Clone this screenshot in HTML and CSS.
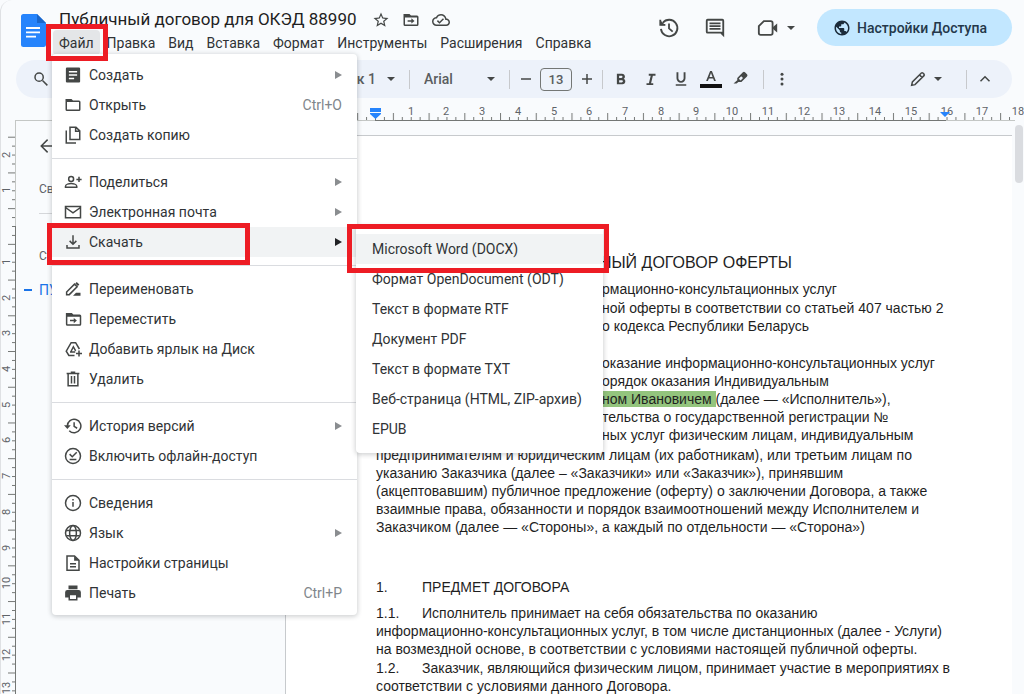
FILE: index.html
```html
<!DOCTYPE html>
<html lang="ru">
<head>
<meta charset="utf-8">
<title>Публичный договор для ОКЭД 88990</title>
<link rel="stylesheet" href="styles.css">
</head>
<body>
<header class="header">
  <svg class="logo" viewBox="0 0 25 33"><path fill="#2684fc" d="M2.500 0H16l9 9v21.500a2.500 2.500 0 0 1-2.500 2.500h-20A2.500 2.500 0 0 1 0 30.500v-28A2.500 2.500 0 0 1 2.500 0z"/><path fill="#1a66ca" d="M16 0l9 9h-9z"/><path stroke="#fff" stroke-width="1.800" d="M5 14h14M5 18.300h14M5 22.600h10"/></svg>
  <div class="heading">
    <div class="title-row">
      <h1 class="doc-title">Публичный договор для ОКЭД 88990</h1>
      <button class="icon-btn" aria-label="Пометить"><svg class="ic18" viewBox="0 0 24 24"><path d="M22 9.240l-7.190-.62L12 2 9.190 8.630 2 9.240l5.460 4.730L5.820 21 12 17.270 18.180 21l-1.630-7.030L22 9.240zM12 15.400l-3.760 2.270 1-4.280-3.320-2.880 4.380-.38L12 6.100l1.710 4.040 4.380.38-3.320 2.880 1 4.280L12 15.400z"/></svg></button>
      <button class="icon-btn" aria-label="Переместить"><svg class="ic18" viewBox="0 0 24 24"><path d="M2 4h8l2 2h8a2 2 0 0 1 2 2v10a2 2 0 0 1-2 2H4a2 2 0 0 1-2-2zM4 8.500V18h16V8.500z" fill-rule="evenodd"/><path d="M7.500 12.300h5V9.800l4.200 3.500-4.200 3.500v-2.500h-5z"/></svg></button>
      <button class="icon-btn" aria-label="Статус документа"><svg class="ic18" viewBox="0 0 24 24"><path d="M19.350 10.040C18.670 6.590 15.640 4 12 4 9.110 4 6.600 5.640 5.350 8.040 2.340 8.360 0 10.910 0 14c0 3.310 2.690 6 6 6h13c2.760 0 5-2.240 5-5 0-2.640-2.050-4.780-4.650-4.960zM19 18H6c-2.210 0-4-1.790-4-4 0-2.050 1.530-3.760 3.560-3.970l1.070-.11.5-.95C8.080 7.140 9.940 6 12 6c2.620 0 4.880 1.860 5.390 4.430l.3 1.500 1.530.11c1.560.1 2.780 1.410 2.780 2.960 0 1.650-1.350 3-3 3zm-9-3.820l-2.090-2.090L6.500 13.500 10 17l6.010-6.010-1.410-1.410z"/></svg></button>
    </div>
    <nav class="menubar">
      <button class="open">Файл</button><button>Правка</button><button>Вид</button><button>Вставка</button><button>Формат</button><button>Инструменты</button><button>Расширения</button><button>Справка</button>
    </nav>
  </div>
  <div class="actions">
    <button class="icon-btn history" aria-label="История версий"><svg class="ic22 line" viewBox="0 0 24 24"><path d="M3.200 13a9 9 0 1 0 2-6.700M2.500 3v5.500H8M12 7v5.500l4 3.500"/><path d="M3 4l5 5H3z" fill="#444746" stroke="none"/></svg></button>
    <button class="icon-btn" aria-label="Комментарии"><svg class="ic22" viewBox="0 0 24 24"><path fill-rule="evenodd" d="M4 2h16a2 2 0 0 1 2 2v18l-4-4H4a2 2 0 0 1-2-2V4a2 2 0 0 1 2-2zm0 2v12h16V4z"/><path d="M6 6h12v2H6zM6 9h12v2H6zM6 12h12v2H6z"/></svg></button>
    <button class="icon-btn meet" aria-label="Встреча"><svg class="ic22 line" viewBox="0 0 24 24"><path d="M7.500 4.500H15a2 2 0 0 1 2 2v11a2 2 0 0 1-2 2H4a2 2 0 0 1-2-2V10z"/><path d="M17.500 11l4.500-4v10l-4.500-4z" fill="#444746" stroke="none"/></svg><svg class="caret" viewBox="0 0 8 4"><path d="M0 0h8L4 4z"/></svg></button>
    <button class="share"><svg class="ic18" viewBox="0 0 24 24"><path d="M12 2C6.480 2 2 6.480 2 12s4.480 10 10 10 10-4.480 10-10S17.520 2 12 2zm-1 17.930c-3.950-.49-7-3.850-7-7.930 0-.62.08-1.210.21-1.790L9 15v1c0 1.100.9 2 2 2v1.930zm6.900-2.540c-.26-.81-1-1.390-1.900-1.390h-1v-3c0-.55-.45-1-1-1H8v-2h2c.55 0 1-.45 1-1V7h2c1.100 0 2-.9 2-2v-.41c2.930 1.190 5 4.060 5 7.410 0 2.080-.8 3.970-2.100 5.390z"/></svg>Настройки Доступа</button>
  </div>
</header>

<div class="toolbar">
  <button class="tool search" aria-label="Поиск"><svg class="ic18 line" viewBox="0 0 24 24"><circle cx="9.500" cy="9.500" r="5.500"/><path d="M14 14l6.500 6.500"/></svg></button>
  <label class="select style"><select aria-label="Стиль"><option>Заголовок 1</option></select><svg class="caret" viewBox="0 0 8 4"><path d="M0 0h8L4 4z"/></svg></label>
  <span class="divider"></span>
  <label class="select font"><select aria-label="Шрифт"><option>Arial</option></select><svg class="caret" viewBox="0 0 8 4"><path d="M0 0h8L4 4z"/></svg></label>
  <span class="divider"></span>
  <button class="step" aria-label="Уменьшить"><svg class="ic12 line" viewBox="0 0 12 12"><path d="M1 6h10"/></svg></button>
  <input class="size" aria-label="Размер шрифта" value="13">
  <button class="step" aria-label="Увеличить"><svg class="ic12 line" viewBox="0 0 12 12"><path d="M1 6h10M6 1v10"/></svg></button>
  <span class="divider"></span>
  <div class="format">
    <button class="tool" aria-label="Полужирный"><svg class="ic18" viewBox="0 0 24 24"><path d="M15.600 11.790c.97-.67 1.650-1.770 1.650-2.790 0-2.260-1.750-4-4-4H6.500v14h7.540c2.090 0 3.710-1.700 3.710-3.790 0-1.520-.86-2.820-2.150-3.420zM9.500 7.500h3c.83 0 1.500.67 1.500 1.500s-.67 1.500-1.500 1.500h-3v-3zm3.500 9H9.500v-3H13c.83 0 1.500.67 1.500 1.500s-.67 1.500-1.500 1.500z"/></svg></button>
    <button class="tool" aria-label="Курсив"><svg class="ic18" viewBox="0 0 24 24"><path d="M9 5v2.500h2.600L9.200 17.500H6V20h9v-2.500h-2.900l2.400-10H18V5z"/></svg></button>
    <button class="tool" aria-label="Подчеркнутый"><svg class="ic18" viewBox="0 0 24 24"><path d="M12 17c3.310 0 6-2.690 6-6V3h-2.500v8c0 1.930-1.570 3.500-3.500 3.500S8.500 12.930 8.500 11V3H6v8c0 3.310 2.690 6 6 6zm-7 2v2h14v-2H5z"/></svg></button>
    <button class="tool" aria-label="Цвет текста"><svg class="ic22" viewBox="0 0 22 22"><path d="M10.100 3h1.800l4 10h-1.800l-1-2.600H8.900L7.900 13H6.100zm-.6 5.900h3L11 4.900z"/><path fill="#111" d="M0 16h22v4H0z"/></svg></button>
    <button class="tool" aria-label="Выделение"><svg class="ic18" viewBox="0 0 24 24"><path fill-rule="evenodd" d="M7 10.500L14.500 3a2 2 0 0 1 2.800 0l2.700 2.700a2 2 0 0 1 0 2.800L12.500 16H8.500L6 18H2l5-4.500zM9 11.500l2.500 2.500 3.200-3.200-2.500-2.500z"/></svg></button>
  </div>
  <span class="divider"></span>
  <button class="tool" aria-label="Ещё"><svg class="ic18" viewBox="0 0 24 24"><circle cx="12" cy="5.500" r="2"/><circle cx="12" cy="12" r="2"/><circle cx="12" cy="18.500" r="2"/></svg></button>
  <button class="mode" aria-label="Режим"><svg class="ic18 line" viewBox="0 0 24 24"><path d="M3.500 20.500l1-4.500L16.500 4a1.500 1.500 0 0 1 2 0l1.500 1.500a1.500 1.500 0 0 1 0 2L8 19.500zM14 6.500l3.500 3.500"/></svg><svg class="caret" viewBox="0 0 8 4"><path d="M0 0h8L4 4z"/></svg></button>
  <span class="divider"></span>
  <button class="tool" aria-label="Скрыть меню"><svg class="ic18 line" viewBox="0 0 24 24"><path d="M6 15l6-6 6 6"/></svg></button>
</div>

<div class="ruler-top">
  <svg viewBox="0 0 1024 23" width="1024" height="23">
    <defs><pattern id="cm" patternUnits="userSpaceOnUse" x="375" y="0" width="35.720" height="23"><path stroke="#747775" d="M.5 19v4M9.400 19v4M18.400 15v8M27.300 19v4"/></pattern></defs>
    <path fill="url(#cm)" d="M300 0h712v23H300z"/>
    <path stroke="#c4c7c5" d="M15 22.500h1000"/><path stroke="#747775" d="M375 22.500h571"/>
    <g class="marks" text-anchor="middle"><text x="411" y="17">1</text><text x="446" y="17">2</text><text x="482" y="17">3</text><text x="518" y="17">4</text><text x="554" y="17">5</text><text x="589" y="17">6</text><text x="625" y="17">7</text><text x="661" y="17">8</text><text x="696" y="17">9</text><text x="732" y="17">10</text><text x="768" y="17">11</text><text x="804" y="17">12</text><text x="839" y="17">13</text><text x="875" y="17">14</text><text x="911" y="17">15</text><text x="947" y="17">16</text><text x="982" y="17">17</text><text x="1018" y="17">18</text></g>
    <path fill="#2684fc" d="M370 10h11v4h-11zM370 15h11v1l-5.500 5-5.500-5zM940 14h10l-5 5z"/>
  </svg>
</div>

<main class="work">
  <div class="ruler-left">
    <svg viewBox="0 0 16 573" width="16" height="573">
      <defs><pattern id="cmv" patternUnits="userSpaceOnUse" x="0" y="105" width="16" height="35.720"><path stroke="#747775" d="M12 .5h4M12 9.400h4M8 18.400h8M12 27.300h4"/></pattern></defs>
      <path fill="url(#cmv)" d="M0 14h16v559H0z"/>
      <path stroke="#c4c7c5" d="M15.500 0v105"/><path stroke="#747775" d="M15.500 105v468"/>
      <g class="marks" text-anchor="middle"><text transform="translate(10 34) rotate(-90)">2</text><text transform="translate(10 69) rotate(-90)">1</text><text transform="translate(10 141) rotate(-90)">1</text><text transform="translate(10 177) rotate(-90)">2</text><text transform="translate(10 212) rotate(-90)">3</text><text transform="translate(10 248) rotate(-90)">4</text><text transform="translate(10 284) rotate(-90)">5</text><text transform="translate(10 319) rotate(-90)">6</text><text transform="translate(10 355) rotate(-90)">7</text><text transform="translate(10 391) rotate(-90)">8</text><text transform="translate(10 427) rotate(-90)">9</text><text transform="translate(10 462) rotate(-90)">10</text><text transform="translate(10 498) rotate(-90)">11</text><text transform="translate(10 534) rotate(-90)">12</text><text transform="translate(10 567) rotate(-90)">13</text></g>
    </svg>
  </div>
  <aside class="outline">
    <button class="back" aria-label="Назад"><svg class="ic18 line" viewBox="0 0 24 24"><path d="M22 12H4M11.500 3.500L3 12l8.500 8.500"/></svg></button>
    <p class="summary">Сводка</p>
    <p class="structure">Структура</p>
    <a class="entry" href="#offer"><span class="dash"></span>ПУ</a>
  </aside>
  <article class="page">
    <h2 class="offer" id="offer">ПУБЛИЧНЫЙ ДОГОВОР ОФЕРТЫ</h2>
    <p><span class="row"><span class="lead"></span><span>рмационно-консультационных услуг</span></span></p>
    <p class="next"><span class="row"><span class="lead"></span><span>ной оферты в соответствии со статьей 407 частью 2</span></span>
      <span class="row"><span class="lead"></span><span>о кодекса Республики Беларусь</span></span></p>
    <p class="terms"><span class="row"><span class="lead"></span><span>оказание информационно-консультационных услуг</span></span>
      <span class="row"><span class="lead"></span><span>орядок оказания Индивидуальным</span></span>
      <span class="row"><span class="lead"></span><span><mark>ном Ивановичем </mark>(далее — «Исполнитель»),</span></span>
      <span class="row"><span class="lead"></span><span>тельства о государственной регистрации №</span></span>
      <span class="row"><span class="lead"></span><span>ных услуг физическим лицам, индивидуальным</span></span></p>
    <p class="parties">предпринимателям и юридическим лицам (их работникам), или третьим лицам по<br>указанию Заказчика (далее – «Заказчики» или «Заказчик»), принявшим<br>(акцептовавшим) публичное предложение (оферту) о заключении Договора, а также<br>взаимные права, обязанности и порядок взаимоотношений между Исполнителем и<br>Заказчиком (далее — «Стороны», а каждый по отдельности — «Сторона»)</p>
    <h3 class="section"><span class="num">1.</span>ПРЕДМЕТ ДОГОВОРА</h3>
    <p><span class="num">1.1.</span>Исполнитель принимает на себя обязательства по оказанию<br>информационно-консультационных услуг, в том числе дистанционных (далее - Услуги)<br>на возмездной основе, в соответствии с условиями настоящей публичной оферты.</p>
    <p class="next"><span class="num">1.2.</span>Заказчик, являющийся физическим лицом, принимает участие в мероприятиях в<br>соответствии с условиями данного Договора.</p>
  </article>
  <div class="scroll"><div class="thumb"></div></div>
</main>

<div class="menu file-menu" role="menu">
  <button class="item"><svg class="ic18" viewBox="0 0 24 24"><path fill-rule="evenodd" d="M4 2h16a1.500 1.500 0 0 1 1.500 1.500v17A1.500 1.500 0 0 1 20 22H4a1.500 1.500 0 0 1-1.500-1.500v-17A1.500 1.500 0 0 1 4 2zm2.500 4.500v2h11v-2zm0 4.500v2h11v-2zm0 4.500v2h7v-2z"/></svg>Создать<i class="more"></i></button>
  <button class="item"><svg class="ic18" viewBox="0 0 24 24"><path fill-rule="evenodd" d="M2 4h8l2 2h8a2 2 0 0 1 2 2v10a2 2 0 0 1-2 2H4a2 2 0 0 1-2-2zM4 8v10h16V8z"/></svg>Открыть<kbd>Ctrl+O</kbd></button>
  <button class="item"><svg class="ic18 line" viewBox="0 0 24 24"><path d="M8 1.500h8l5 5V18H8zM15.500 2v5H21M3 6v16.500h13"/></svg>Создать копию</button>
  <hr>
  <button class="item"><svg class="ic18 line" viewBox="0 0 24 24"><circle cx="9.500" cy="8" r="3.300"/><path d="M2 19v-1.500c0-2.500 5-3.500 7.500-3.500s7.500 1 7.500 3.500V19zM16.500 8.500h7M20 5v7"/></svg>Поделиться<i class="more"></i></button>
  <button class="item"><svg class="ic18 line" viewBox="0 0 24 24"><path d="M2 4.500h20v15H2zM2 6l10 7 10-7"/></svg>Электронная почта<i class="more"></i></button>
  <button class="item active"><svg class="ic18 line" viewBox="0 0 24 24"><path d="M12 3v12M7.500 10.500L12 15l4.500-4.500M4 16v4h16v-4"/></svg>Скачать<i class="more"></i></button>
  <hr>
  <button class="item"><svg class="ic18 line" viewBox="0 0 24 24"><path d="M3.500 19.500v-3.500L14 5.500l3.500 3.500L7 19.500z"/><path d="M15 4.500L17 2.500l3.500 3.500-2 2zM12 21l4-4h6v4z" fill="#444746" stroke="none"/></svg>Переименовать</button>
  <button class="item"><svg class="ic18" viewBox="0 0 24 24"><path fill-rule="evenodd" d="M2.500 4h8l2 2H21a2 2 0 0 1 2 2v11a2 2 0 0 1-2 2H4.500a2 2 0 0 1-2-2zm2 5v10H21V9z"/><path d="M8 13h5v-2.500l4.200 3.500-4.200 3.500V15H8z"/></svg>Переместить</button>
  <button class="item"><svg class="ic18 line" viewBox="0 0 24 24"><path d="M14 20.500H6.500L3 15 9.500 3.500h6L20.500 12M9 16l3.500-7 3 5.500M8 16h7M20 14v8M16 18h8"/></svg>Добавить ярлык на Диск</button>
  <button class="item"><svg class="ic18 line" viewBox="0 0 24 24"><path d="M5.500 5v16h13V5M3.500 4.500h17M9 3h6M10 8v10M14 8v10"/></svg>Удалить</button>
  <hr>
  <button class="item"><svg class="ic18 line" viewBox="0 0 24 24"><path d="M4.500 12a9 9 0 1 1 2.500 6.200M13.500 7v5.500l4 2.500"/><path d="M0 11h9l-4.500 5z" fill="#444746" stroke="none"/></svg>История версий<i class="more"></i></button>
  <button class="item"><svg class="ic18 line" viewBox="0 0 24 24"><circle cx="12" cy="12" r="10"/><path d="M7.500 9.500l3.500 3.500 6-6M7.500 16.500h9"/></svg>Включить офлайн-доступ</button>
  <hr>
  <button class="item"><svg class="ic18 line" viewBox="0 0 24 24"><circle cx="12" cy="12" r="10"/><path d="M12 10.500V17M12 6.500v2"/></svg>Сведения</button>
  <button class="item"><svg class="ic18 line" viewBox="0 0 24 24"><circle cx="12" cy="12" r="10"/><ellipse cx="12" cy="12" rx="4.500" ry="10"/><path d="M3 8.500h18M3 15.500h18"/></svg>Язык<i class="more"></i></button>
  <button class="item"><svg class="ic18 line" viewBox="0 0 24 24"><path d="M4 2.500h10l6 6v13H4z"/><path d="M8 13h8M8 17h8"/><path d="M13.500 2.500V9H20z" fill="#444746" stroke="none"/></svg>Настройки страницы</button>
  <button class="item"><svg class="ic18" viewBox="0 0 24 24"><path fill-rule="evenodd" d="M6 2h12v5H6zM4.500 8h15a3 3 0 0 1 3 3v7H18v4H6v-4H1.500v-7a3 3 0 0 1 3-3zM8 15v5h8v-5z"/></svg>Печать<kbd>Ctrl+P</kbd></button>
</div>

<div class="menu download-menu" role="menu">
  <button class="item active">Microsoft Word (DOCX)</button>
  <button class="item">Формат OpenDocument (ODT)</button>
  <button class="item">Текст в формате RTF</button>
  <button class="item">Документ PDF</button>
  <button class="item">Текст в формате TXT</button>
  <button class="item">Веб-страница (HTML, ZIP-архив)</button>
  <button class="item">EPUB</button>
</div>

<div class="frame frame-file"></div>
<div class="frame frame-download"></div>
<div class="frame frame-docx"></div>
</body>
</html>
```
FILE: styles.css
```css
* { box-sizing: border-box; }
body {
  margin: 0;
  height: 100vh;
  display: flex;
  flex-direction: column;
  overflow: hidden;
  position: relative;
  background: #f9fbfd;
  border-left: 1px solid #dfe1e4;
  border-top-left-radius: 12px;
  font-family: Roboto, "Liberation Sans", sans-serif;
  font-size: 14px;
  color: #3c4043;
}
button {
  border: 0;
  padding: 0;
  margin: 0;
  background: none;
  font: inherit;
  color: inherit;
}
h1, h2, h3, p { margin: 0; font-weight: 400; }
svg { display: block; fill: #444746; flex: none; }
.line { fill: none; stroke: #444746; stroke-width: 2; }
.ic12 { width: 12px; height: 12px; }
.ic12.line { stroke-width: 1.5; }
.ic18 { width: 18px; height: 18px; }
.ic22 { width: 22px; height: 22px; }
.caret { width: 8px; height: 4px; }

.header {
  display: flex;
  align-items: flex-start;
  flex: none;
  height: 60px;
  padding: 0 12px 0 20px;
}
.logo { width: 25px; height: 33px; margin-top: 14px; }
.heading { padding: 9px 0 0 7px; }
.title-row { display: flex; align-items: center; gap: 12px; height: 21px; padding-left: 6px; }
.doc-title { font-size: 17px; line-height: 21px; color: #1f1f1f; margin-right: 3px; white-space: nowrap; }
.menubar { display: flex; gap: 1px; }
.menubar button {
  height: 25px;
  padding: 0 6px;
  border-radius: 4px;
  white-space: nowrap;
  color: #303336;
}
.menubar .open { background: #e4e6e8; }
.actions { display: flex; align-items: center; gap: 22px; margin-left: auto; padding-top: 9px; }
.history { margin-right: 2px; }
.meet { display: flex; align-items: center; gap: 8px; margin-left: 9px; }
.share {
  display: flex;
  align-items: center;
  gap: 6px;
  height: 37px;
  padding: 0 25px 0 16px;
  border-radius: 19px;
  background: #c2e7ff;
  color: #24384a;
  font-weight: 500;
  white-space: nowrap;
}
.share svg { fill: #1b2b3a; }

.toolbar {
  display: flex;
  align-items: center;
  flex: none;
  height: 38px;
  margin: 0 12px 0 15px;
  padding: 0 16px 0 8px;
  border-radius: 19px;
  background: #edf2fa;
  font-weight: 500;
  color: #5a5d60;
}
.tool { width: 22px; height: 26px; display: flex; align-items: center; justify-content: center; }
.search { width: 34px; }
.select { position: relative; display: flex; align-items: center; }
.select .caret { position: absolute; right: 7px; }
.select select {
  appearance: none;
  width: 100%;
  border: 0;
  background: none;
  font: inherit;
  color: inherit;
  padding: 0 26px 0 7px;
}
.style { width: 118px; margin-left: 226px; }
.style select { text-align-last: right; }
.font { width: 85px; }
.divider { width: 1px; height: 19px; margin: 0 7px; background: #c7c9cc; }
.step { width: 17px; height: 24px; display: flex; align-items: center; justify-content: center; }
.size {
  width: 32px;
  height: 23px;
  margin: 0 6px;
  padding: 0;
  border: 1px solid #747775;
  border-radius: 4px;
  background: none;
  font: inherit;
  font-size: 13px;
  color: inherit;
  text-align: center;
}
.format { display: flex; gap: 8px; padding-right: 4px; }
.mode { display: flex; align-items: center; gap: 7px; width: 52px; margin-left: auto; padding-left: 2px; }

.ruler-top { height: 23px; flex: none; overflow: hidden; }
.ruler-top svg { margin-left: -1px; }
.marks { fill: #5f6368; font-size: 11px; }

.work { flex: 1; min-height: 0; display: flex; overflow: hidden; }
.ruler-left { width: 15px; flex: none; overflow: hidden; }
.ruler-left svg { margin-left: -1px; }
.outline { width: 269px; flex: none; padding: 16px 0 0 23px; font-size: 12px; color: #5f6368; }
.back { display: block; }
.summary { margin-top: 24px; padding-bottom: 14px; line-height: 20px; border-bottom: 1px solid #d5d7da; }
.structure { margin-top: 32px; line-height: 20px; }
.entry { display: flex; align-items: center; gap: 7px; margin: 15px 0 0 -15px; line-height: 18px; font-size: 14px; color: #1a73e8; text-decoration: none; }
.dash { width: 8px; height: 2px; background: #1a73e8; }
.page {
  flex: 1;
  min-width: 0;
  margin-top: 14px;
  padding: 115px 61px 0 90px;
  background: #fff;
  border: solid #c7cacd;
  border-width: 1px 0 0 1px;
  font-family: "Liberation Sans", Arial, sans-serif;
  font-size: 14px;
  line-height: 18px;
  color: #1f1f1f;
  white-space: nowrap;
}
.offer { font-size: 16px; line-height: 24px; margin-bottom: 5px; text-align: center; }
.page .next { margin-top: 1px; }
.page .terms { margin-top: 19px; }
.page .parties { margin-top: 2px; }
.section { font-size: 14px; margin: 42px 0 8px; }
.row { display: flex; }
.lead { width: 226px; flex: none; }
mark { background: #93c47d; color: inherit; white-space: pre; }
.num { display: inline-block; width: 46px; }
.scroll { width: 12px; padding: 4px 1px 0 3px; flex: none; }
.thumb { height: 58px; border-radius: 4px; background: #dadce0; }

.menu {
  position: absolute;
  background: #fff;
  border-radius: 4px;
  box-shadow: 0 1px 4px 1px rgba(60, 64, 67, .22);
  color: #303336;
}
.file-menu { left: 51px; top: 54px; width: 305px; padding: 6px 0 7px; }
.download-menu { left: 355px; top: 226px; width: 247px; padding: 8px 0 9px; }
.item {
  display: flex;
  align-items: center;
  gap: 7px;
  width: 100%;
  height: 30px;
  padding: 0 15px 0 12px;
  white-space: nowrap;
}
.download-menu .item { padding-left: 16px; }
.active { background: #f1f3f4; }
.menu hr { height: 1px; margin: 8px 0; border: 0; background: #dadce0; }
.more {
  margin-left: auto;
  border-left: 7px solid #8a8d90;
  border-top: 4px solid transparent;
  border-bottom: 4px solid transparent;
}
.active .more { border-left-color: #202124; }
kbd { margin-left: auto; font: inherit; color: #80868b; }

.frame { position: absolute; border: 5px solid #ed1c24; pointer-events: none; }
.frame-file { left: 45px; top: 24px; width: 62px; height: 37px; }
.frame-download { left: 46px; top: 223px; width: 203px; height: 42px; }
.frame-docx { left: 346px; top: 224px; width: 262px; height: 49px; }
```
